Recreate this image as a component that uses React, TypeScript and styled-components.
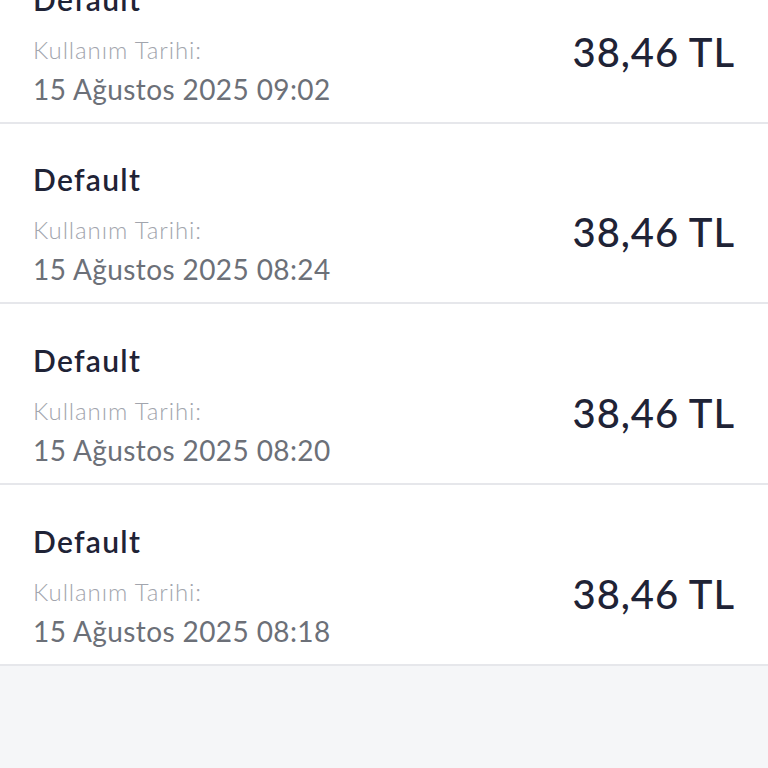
import React from "react";
import styled, { createGlobalStyle } from "styled-components";

const Global = createGlobalStyle`
  html, body { margin: 0; padding: 0; background: #f5f6f8; }
  body { font-family: "Lato", "Noto Sans", sans-serif; overflow: hidden; }
`;

const Page = styled.div`
  width: 768px;
  height: 768px;
  overflow: hidden;
  background: #f5f6f8;
`;

const List = styled.div`
  margin-top: -57px;
  background: #ffffff;
`;

const Row = styled.div`
  box-sizing: border-box;
  height: 180.7px;
  border-bottom: 2px solid #e6e7eb;
  padding: 35.7px 33px 0;
  display: flex;
  align-items: flex-start;
  justify-content: space-between;
  background: #ffffff;
`;

const Info = styled.div`
  display: flex;
  flex-direction: column;
`;

const Title = styled.div`
  font-size: 30px;
  line-height: 40px;
  margin-bottom: 10px;
  font-weight: 600;
  letter-spacing: 1.3px;
  color: #1f2336;
`;

const Label = styled.div`
  font-size: 24px;
  line-height: 42px;
  font-weight: 300;
  letter-spacing: 0.9px;
  color: #a2a5ad;
`;

const DateText = styled.div`
  font-size: 28px;
  line-height: 37px;
  font-weight: 400;
  letter-spacing: 0.4px;
  color: #6c7078;
`;

const Amount = styled.div`
  font-size: 40px;
  line-height: 48px;
  font-weight: 500;
  letter-spacing: 0.9px;
  color: #1f2336;
  margin-top: 49px;
`;

const items = ["09:02", "08:24", "08:20", "08:18"];

export default function App() {
  return (
    <Page>
      <Global />
      <List>
        {items.map((t) => (
          <Row key={t}>
            <Info>
              <Title>Default</Title>
              <Label>Kullanım Tarihi:</Label>
              <DateText>15 Ağustos 2025 {t}</DateText>
            </Info>
            <Amount>38,46 TL</Amount>
          </Row>
        ))}
      </List>
    </Page>
  );
}
